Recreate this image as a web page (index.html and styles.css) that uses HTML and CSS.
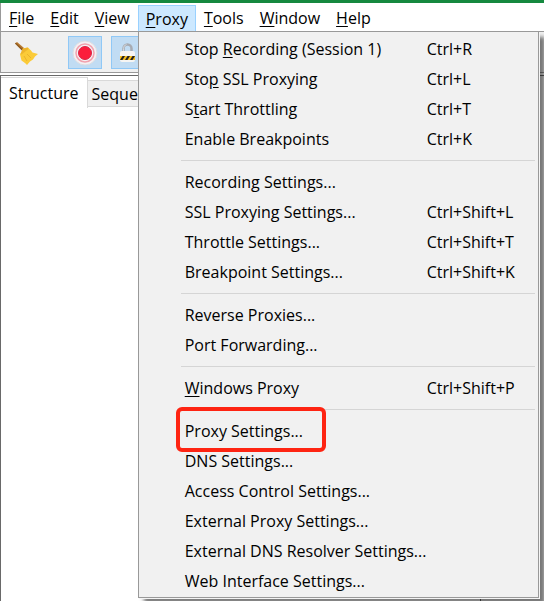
FILE: index.html
```html
<!DOCTYPE html>
<html lang="en">
<head>
    <meta charset="UTF-8">
    <meta name="viewport" content="width=device-width, initial-scale=1.0">
    <title>Proxy Menu</title>
    <link rel="stylesheet" href="styles.css">
</head>
<body>

    <nav class="menubar">
        <button class="menu-btn"><u>F</u>ile</button>
        <button class="menu-btn"><u>E</u>dit</button>
        <button class="menu-btn"><u>V</u>iew</button>
        <div class="menu-wrap">
            <button class="menu-btn active"><u>P</u>roxy</button>
            <div class="dropdown">
                <button class="item"><span>Stop <u>R</u>ecording (Session 1)</span><span class="key">Ctrl+R</span></button>
                <button class="item"><span>Sto<u>p</u> SSL Proxying</span><span class="key">Ctrl+L</span></button>
                <button class="item"><span>S<u>t</u>art Throttling</span><span class="key">Ctrl+T</span></button>
                <button class="item"><span>Enable Breakpoints</span><span class="key">Ctrl+K</span></button>
                <hr>
                <button class="item"><span>Recording Settings...</span></button>
                <button class="item"><span>SSL Proxying Settings...</span><span class="key">Ctrl+Shift+L</span></button>
                <button class="item"><span>Throttle Settings...</span><span class="key">Ctrl+Shift+T</span></button>
                <button class="item"><span>Breakpoint Settings...</span><span class="key">Ctrl+Shift+K</span></button>
                <hr>
                <button class="item"><span>Reverse Proxies...</span></button>
                <button class="item"><span>Port Forwarding...</span></button>
                <hr>
                <button class="item"><span><u>W</u>indows Proxy</span><span class="key">Ctrl+Shift+P</span></button>
                <hr>
                <button class="item marked"><span>Proxy Settings...</span></button>
                <button class="item"><span>DNS Settings...</span></button>
                <button class="item"><span>Access Control Settings...</span></button>
                <button class="item"><span>External Proxy Settings...</span></button>
                <button class="item"><span>External DNS Resolver Settings...</span></button>
                <button class="item"><span>Web Interface Settings...</span></button>
            </div>
        </div>
        <button class="menu-btn"><u>T</u>ools</button>
        <button class="menu-btn"><u>W</u>indow</button>
        <button class="menu-btn"><u>H</u>elp</button>
    </nav>

    <div class="toolbar">
        <button class="tool" aria-label="Clear">
            <svg width="26" height="26" viewBox="0 0 26 26">
                <path d="M2 3.500l2-1.500 7 6-2 2.500z" fill="#b8792e"/>
                <path d="M2 3.500l7 7 1-1.200-7.200-6.500z" fill="#8d5a22"/>
                <path d="M10 8.500l5-1 3 3 1.500 2 5.500 1.500-3 2.500-2 3-3 2-3 3.500-2-2-3.500-2.500-1.500-6z" fill="#fbcb38"/>
                <path d="M10 8.500l4.500-1 1 1.500-7 5.500-1-.5z" fill="#eeb52d"/>
                <path d="M11 16l3 5M14 14l4 4" stroke="#eab42c" stroke-width="1" fill="none"/>
            </svg>
        </button>
        <button class="tool on" aria-label="Record">
            <svg width="26" height="26" viewBox="0 0 26 26">
                <circle cx="13" cy="13" r="12" fill="#f4f0f3" stroke="#dcdde2"/>
                <circle cx="13" cy="13" r="9" fill="none" stroke="#f2a1ae" stroke-width="1.500"/>
                <circle cx="13" cy="13" r="6.500" fill="#fb1d3c" stroke="#d92445"/>
            </svg>
        </button>
        <button class="tool on" aria-label="SSL proxying">
            <svg width="26" height="26" viewBox="0 0 26 26">
                <path d="M8.500 13V8.500a4 4 0 0 1 8 0V13" fill="none" stroke="#a7abb2" stroke-width="2.500"/>
                <path d="M8.500 12V8.500a4 4 0 0 1 3-4" fill="none" stroke="#d5d7db" stroke-width="1"/>
                <rect x="5" y="11" width="15" height="11" rx="2" fill="#f6f5f3"/>
                <path d="M5 16h15v4H5z" fill="#f7bd1b"/>
                <path d="M5 20l2.500-4h2.500l-2.500 4zM10 20l2.500-4H15l-2.500 4zM15 20l2.500-4H20l-2.500 4z" fill="#25221e"/>
            </svg>
        </button>
    </div>

    <main class="workspace">
        <section class="sidebar">
            <div class="tabs">
                <button class="tab selected">Structure</button>
                <button class="tab">Sequence</button>
            </div>
        </section>
        <section class="detail"></section>
    </main>

</body>
</html>
```
FILE: styles.css
```css
* {
    margin: 0;
    padding: 0;
    box-sizing: border-box;
}

body {
    height: 100vh;
    display: flex;
    flex-direction: column;
    overflow: hidden;
    background: #fff;
    border-top: 3px solid #15893f;
    font-family: "Open Sans", "Noto Sans", sans-serif;
    font-size: 16px;
    color: #000;
}

button {
    border: none;
    background: none;
    font: inherit;
    color: inherit;
}

u {
    text-underline-offset: 2px;
}

.menubar {
    display: flex;
    padding-top: 2px;
    border-left: 1px solid #999;
    border-bottom: 1px solid #999;
}

.menu-btn {
    height: 26px;
    padding: 0 7px;
    border: 1px solid transparent;
    line-height: 24px;
}

.menu-btn.active {
    background: #cce8ff;
    border-color: #99d1ff;
    border-bottom: none;
}

.menu-wrap {
    position: relative;
}

.dropdown {
    position: absolute;
    top: 26px;
    left: 0;
    z-index: 1;
    width: 401px;
    padding: 2px 2px 1px;
    background: #f1f1f1;
    border: 1px solid #999;
    box-shadow: 1px 1px 0 #f4f4f4, 6px 6px 4px 0 rgba(0, 0, 0, 0.5);
}

.dropdown hr {
    height: 1px;
    margin: 6px 1px 6px 40px;
    border: none;
    background: #d5d5d5;
}

.item {
    position: relative;
    display: flex;
    justify-content: space-between;
    align-items: center;
    width: 100%;
    height: 30px;
    padding-left: 44px;
    text-align: left;
}

.item:hover {
    background: #90c8f6;
}

.key {
    width: 109px;
}

/* red frame round the highlighted entry */
.marked::after {
    content: "";
    position: absolute;
    top: -9px;
    left: 35px;
    width: 142px;
    height: 37px;
    border: 4px solid #fe2412;
    border-radius: 6px;
}

.toolbar {
    display: flex;
    gap: 9px;
    height: 41px;
    padding: 4px 8px;
    background: #f0f0f0;
    border-left: 1px solid #999;
    border-bottom: 1px solid #999;
}

.tool {
    display: flex;
    align-items: center;
    justify-content: center;
    width: 34px;
    height: 33px;
    border: 1px solid transparent;
}

.tool:first-child {
    margin-right: 16px;
}

.tool.on {
    background: #c1dcf3;
    border-color: #90c8f6;
}

.workspace {
    flex: 1;
    display: flex;
    margin-top: 2px;
    border-top: 1px solid #696969;
    border-left: 1px solid #696969;
}

.sidebar {
    width: 480px;
    border-right: 1px solid #696969;
}

.detail {
    flex: 1;
    background: #f0f0f0;
}

.tabs {
    display: flex;
    align-items: flex-start;
    padding-top: 1px;
}

.tab {
    height: 27px;
    margin-top: 3px;
    padding: 0 4px;
    background: #f0f0f0;
    border: 1px solid #d9d9d9;
    border-left: none;
}

.tab.selected {
    height: 31px;
    margin-top: 0;
    padding: 0 8px;
    background: #fff;
    border-bottom: none;
    border-left: none;
}
```
